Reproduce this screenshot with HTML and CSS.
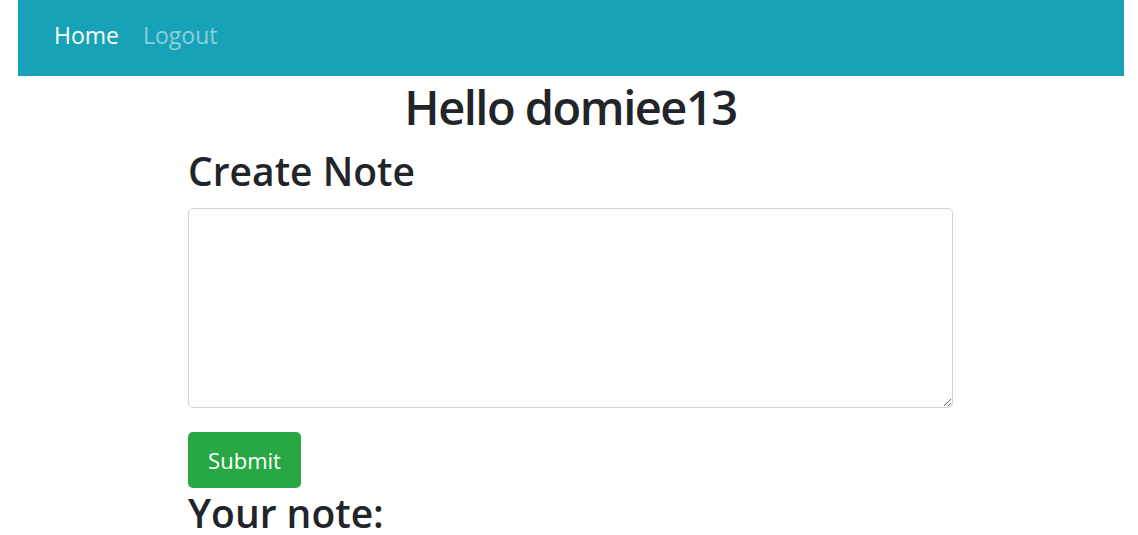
FILE: index.html
```html
<!DOCTYPE html>
<html lang="en">
<head>
<meta charset="utf-8">
<title>Notes</title>
<link rel="stylesheet" href="styles.css">
</head>
<body>
<nav class="navbar">
  <a class="nav-link active" href="#">Home</a>
  <a class="nav-link" href="#">Logout</a>
</nav>
<main class="container">
  <h1 class="greeting">Hello domiee13</h1>
  <h2 class="section-title">Create Note</h2>
  <form class="note-form">
    <textarea class="note-input" aria-label="Note"></textarea>
    <button type="button" class="btn-submit">Submit</button>
  </form>
  <h2 class="notes-title">Your note:</h2>
</main>
</body>
</html>
```

FILE: styles.css
```css
html, body {
  margin: 0;
  padding: 0;
  background: #fff;
}
body {
  font-family: "Open Sans", "Noto Sans", sans-serif;
  color: #212529;
  overflow: hidden;
}
.navbar {
  margin-left: 18px;
  width: 1106px;
  height: 76px;
  background: #17a2b8;
  display: flex;
  align-items: center;
  gap: 24px;
  padding: 0 0 6px 36px;
  box-sizing: border-box;
}
.nav-link {
  font-size: 23px;
  line-height: 30px;
  text-decoration: none;
  color: rgba(255, 255, 255, 0.5);
}
.nav-link.active {
  color: #fff;
}
.container {
  width: 765px;
  margin: 0 0 0 188px;
}
.greeting {
  margin: 1px 0 0;
  text-align: center;
  font-size: 47px;
  letter-spacing: -1.5px;
  line-height: 60px;
  font-weight: 600;
}
.section-title,
.notes-title {
  font-size: 39px;
  line-height: 48px;
  font-weight: 600;
}
.section-title {
  margin: 10px 0 13px;
}
.notes-title {
  margin: 1px 0 0;
}
.note-form {
  display: flex;
  flex-direction: column;
  align-items: flex-start;
  gap: 24px;
}
.note-input {
  display: block;
  width: 765px;
  height: 200px;
  box-sizing: border-box;
  border: 1px solid #ced4da;
  border-radius: 5px;
  resize: vertical;
  font-family: inherit;
  margin: 0;
}
.btn-submit {
  width: 113px;
  height: 56px;
  border: none;
  border-radius: 5px;
  background: #28a745;
  color: #fff;
  font-family: inherit;
  font-size: 22px;
  padding: 0;
}
```
